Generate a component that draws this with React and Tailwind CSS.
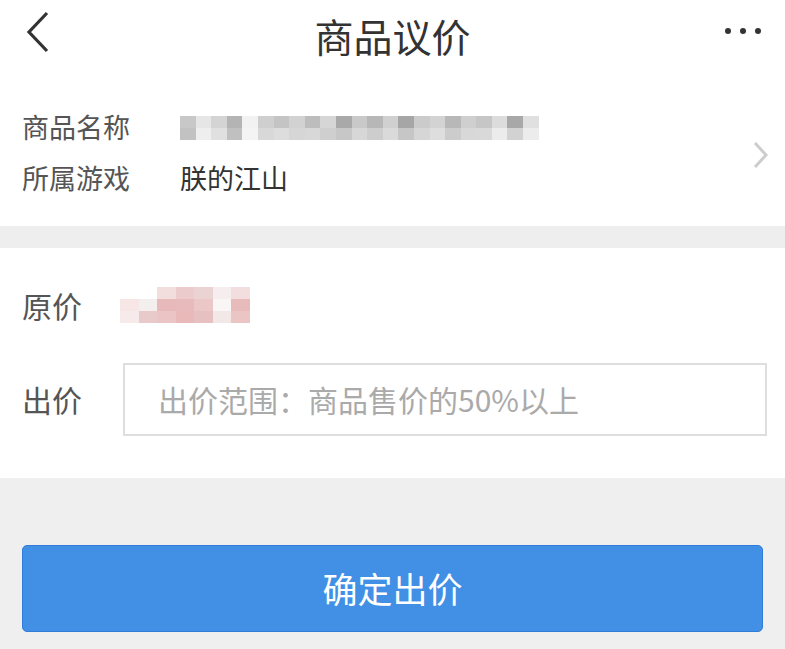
const nameBlur = [
  ["#c8c8c8", "#e6e6e6", "#d4d4d4", "#b4b4b4", "#f2f2f2", "#cfcfcf", "#c4c4c4", "#d2d2d2", "#bdbdbd", "#d6d6d6", "#a9a9a9", "#c9c9c9", "#b7b7b7", "#d0d0d0", "#a6a6a6", "#cbcbcb", "#d3d3d3", "#b8b8b8", "#cfcfcf", "#c6c6c6", "#dcdcdc", "#a8a8a8", "#e0e0e0"],
  ["#c2c2c2", "#eeeeee", "#e0e0e0", "#c0c0c0", "#f4f4f4", "#d8d8d8", "#dddddd", "#d6d6d6", "#d8d8d8", "#cfcfcf", "#c7c7c7", "#d7d7d7", "#cdcdcd", "#dadada", "#c6c6c6", "#d6d6d6", "#dedede", "#cccccc", "#d8d8d8", "#d9d9d9", "#ececec", "#d2d2d2", "#ececec"],
];

const priceBlur = [
  ["#ffffff", "#ffffff", "#f3dede", "#ebcbcb", "#ecd3d3", "#f6eeee", "#f2dede"],
  ["#f6e6e6", "#f4efef", "#e8b9b9", "#e7bbbb", "#ebc7c7", "#faf6f6", "#e8bbbb"],
  ["#f6eaea", "#e8caca", "#ebc5c5", "#e9b9b9", "#e7c1c1", "#f3e8e8", "#ebc4c4"],
];

function Row({ label, children }) {
  return (
    <div className="flex h-[51px] items-center">
      <div className="w-[158px] text-[27px] text-[#555]">{label}</div>
      {children}
    </div>
  );
}

export default function App() {
  return (
    <div
      className="min-h-[649px] w-[785px] bg-[#efefef]"
      style={{ fontFamily: '"Noto Sans CJK SC", "Noto Sans", sans-serif' }}
    >
      {/* header */}
      <div className="relative flex h-[70px] items-center justify-center bg-white">
        <svg className="absolute left-[26px] top-[11px]" width="24" height="42" viewBox="0 0 24 42">
          <path d="M21 2 L3 21 L21 40" fill="none" stroke="#333" strokeWidth="3.2" strokeLinejoin="miter" />
        </svg>
        <div className="text-[39px] text-[#333]">商品议价</div>
        <div className="absolute right-[24px] top-[28px] flex gap-[9px]">
          <span className="h-[6px] w-[6px] rounded-full bg-[#333]" />
          <span className="h-[6px] w-[6px] rounded-full bg-[#333]" />
          <span className="h-[6px] w-[6px] rounded-full bg-[#333]" />
        </div>
      </div>

      {/* product info */}
      <div className="flex items-center bg-white pb-[22px] pl-[22px] pr-[14px] pt-[32px]">
        <div className="flex-1">
          <Row label="商品名称">
            <div className="flex flex-col">
              {nameBlur.map((line, i) => (
                <div key={i} className="flex">
                  {line.map((c, j) => (
                    <span key={j} className="h-[12px] w-[15.6px]" style={{ backgroundColor: c }} />
                  ))}
                </div>
              ))}
            </div>
          </Row>
          <Row label="所属游戏">
            <span className="text-[27px] text-[#333]">朕的江山</span>
          </Row>
        </div>
        <svg className="mt-[4px]" width="20" height="28" viewBox="0 0 20 28">
          <path d="M4 2 L15 14 L4 26" fill="none" stroke="#cdcdcd" strokeWidth="3" />
        </svg>
      </div>

      <div className="h-[22px] bg-[#eeeeee]" />

      {/* price */}
      <div className="bg-white pb-[42px] pl-[22px] pr-[18px] pt-[32px]">
        <div className="flex h-[50px] items-center">
          <div className="w-[98px] text-[30px] text-[#555]">原价</div>
          <div className="flex flex-col">
            {priceBlur.map((line, i) => (
              <div key={i} className="flex">
                {line.map((c, j) => (
                  <span key={j} className="h-[12px] w-[18.5px]" style={{ backgroundColor: c }} />
                ))}
              </div>
            ))}
          </div>
        </div>
        <div className="mt-[33px] flex h-[73px] items-center">
          <div className="w-[101px] text-[30px] text-[#555]">出价</div>
          <div className="flex h-full flex-1 items-center border-2 border-[#dedede] pl-[33px] text-[30px] text-[#aaa]">
            出价范围：商品售价的50%以上
          </div>
        </div>
      </div>

      {/* submit */}
      <div className="px-[22px] pt-[67px]">
        <button className="flex h-[87px] w-full items-center justify-center rounded-[5px] border border-[#2f7dd8] bg-[#428fe6] text-[35px] text-white">
          确定出价
        </button>
      </div>
    </div>
  );
}
